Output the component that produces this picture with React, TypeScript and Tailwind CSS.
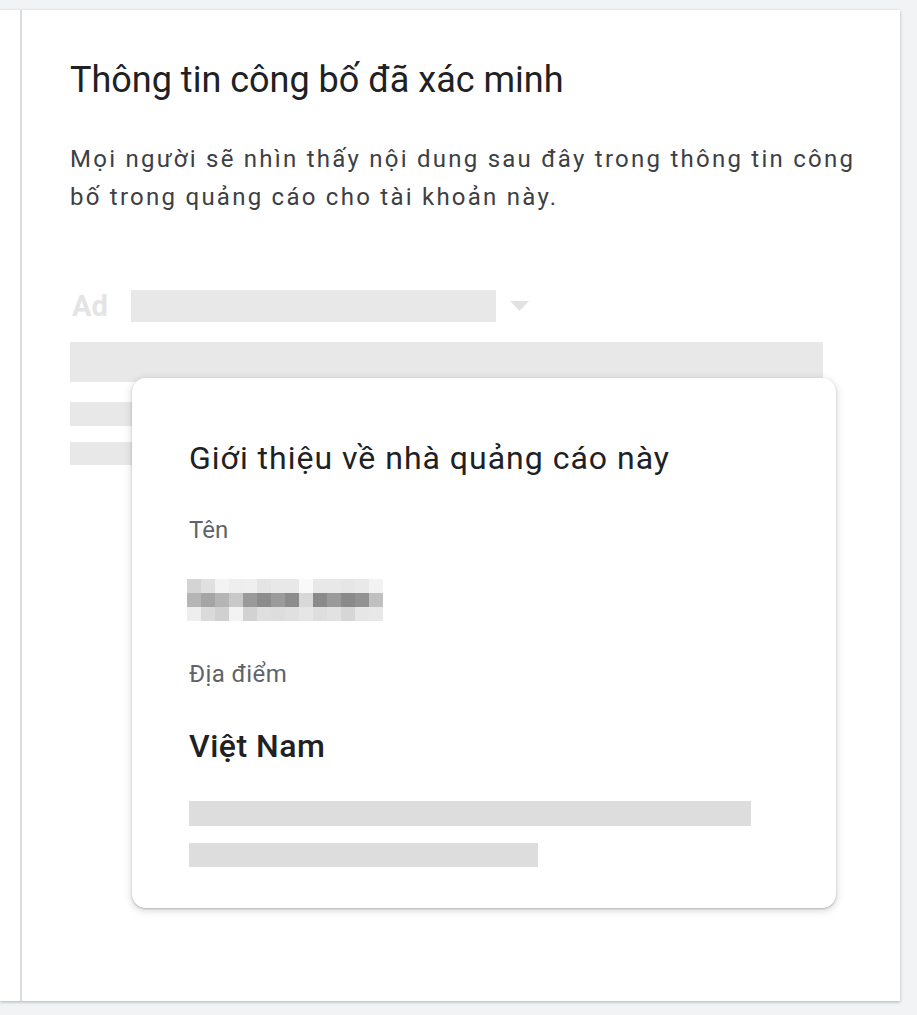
import React from "react";

const pixelRows: string[][] = [
    ["#d4d4d4", "#e0e0e0", "#f3f3f3", "#eeeeee", "#efefef", "#e4e4e4", "#e8e8e8", "#e8e8e8", "#f9f9f9", "#e8e8e8", "#e8e8e8", "#e6e6e6", "#e9e9e9", "#f2f2f2"],
    ["#b5b5b5", "#a5a5a5", "#b5b5b5", "#c8c8c8", "#9a9a9a", "#8c8c8c", "#9b9b9b", "#8c8c8c", "#d8d8d8", "#8a8a8a", "#9a9a9a", "#8a8a8a", "#929292", "#c0c0c0"],
    ["#eeeeee", "#dadada", "#d0d0d0", "#f3f3f3", "#d2d2d2", "#dfdfdf", "#dddddd", "#e0e0e0", "#e6e6e6", "#dedede", "#e2e2e2", "#d6d6d6", "#e6e6e6", "#e8e8e8"],
];

function BlurredName() {
    return (
        <div className="ml-[-2px] flex flex-col">
            {pixelRows.map((row, r) => (
                <div key={r} className="flex">
                    {row.map((c, i) => (
                        <div key={i} className="h-[14px] w-[14px]" style={{ backgroundColor: c }} />
                    ))}
                </div>
            ))}
        </div>
    );
}

function AdvertiserCard() {
    return (
        <div className="absolute left-[62px] top-[88px] h-[530px] w-[704px] rounded-[14px] bg-white pl-[57px] pt-[60px] shadow-[0_1px_2px_rgba(60,64,67,0.3),0_2px_6px_2px_rgba(60,64,67,0.15)]">
            <h2 className="text-[32px] leading-[40px] tracking-[1px] text-[#202124]">Giới thiệu về nhà quảng cáo này</h2>
            <p className="mt-[36px] text-[24px] leading-[32px] text-[#5f6368]">Tên</p>
            <div className="mt-[33px]">
                <BlurredName />
            </div>
            <p className="mt-[37px] text-[24px] leading-[32px] tracking-[0.4px] text-[#5f6368]">Địa điểm</p>
            <p className="mt-[36px] text-[32px] font-medium leading-[40px] tracking-[0.5px] text-[#202124]">Việt Nam</p>
            <div className="mt-[35px] h-[25px] w-[562px] bg-[#dddddd]" />
            <div className="mt-[17px] h-[24px] w-[349px] bg-[#dddddd]" />
        </div>
    );
}

export default function App() {
    return (
        <main className="min-h-[1015px] bg-[#f1f3f4] pt-[10px] font-['Roboto','Liberation_Sans',sans-serif]">
            <div className="flex h-[991px] w-[900px] bg-white shadow-[0_1px_3px_rgba(60,64,67,0.35)]">
                <div className="w-[20px] shrink-0" />
                <section className="flex-1 border-l-2 border-[#dadce0] pl-[48px] pt-[48px]">
                    <h1 className="text-[36px] leading-[44px] text-[#202124]">Thông tin công bố đã xác minh</h1>
                    <p className="mt-[38px] w-[800px] text-[24px] leading-[38px] tracking-[2.25px] text-[#3c4043]">
                        Mọi người sẽ nhìn thấy nội dung sau đây trong thông tin công bố trong quảng cáo cho tài khoản này.
                    </p>

                    <div className="relative mt-[74px] w-[753px]">
                        <div className="flex h-[32px] items-center">
                            <span className="w-[61px] pl-[2px] text-[29px] font-bold leading-[32px] text-[#e4e4e4]">Ad</span>
                            <div className="h-[32px] w-[365px] bg-[#e8e8e8]" />
                            <svg className="ml-[14px]" width="19" height="10" viewBox="0 0 19 10">
                                <path d="M0 0h19L9.5 10z" fill="#e2e2e2" />
                            </svg>
                        </div>
                        <div className="mt-[20px] h-[40px] w-[753px] bg-[#e8e8e8]" />
                        <div className="mt-[20px] h-[24px] w-[400px] bg-[#e8e8e8]" />
                        <div className="mt-[16px] h-[23px] w-[400px] bg-[#e8e8e8]" />
                        <AdvertiserCard />
                    </div>
                </section>
            </div>
        </main>
    );
}
